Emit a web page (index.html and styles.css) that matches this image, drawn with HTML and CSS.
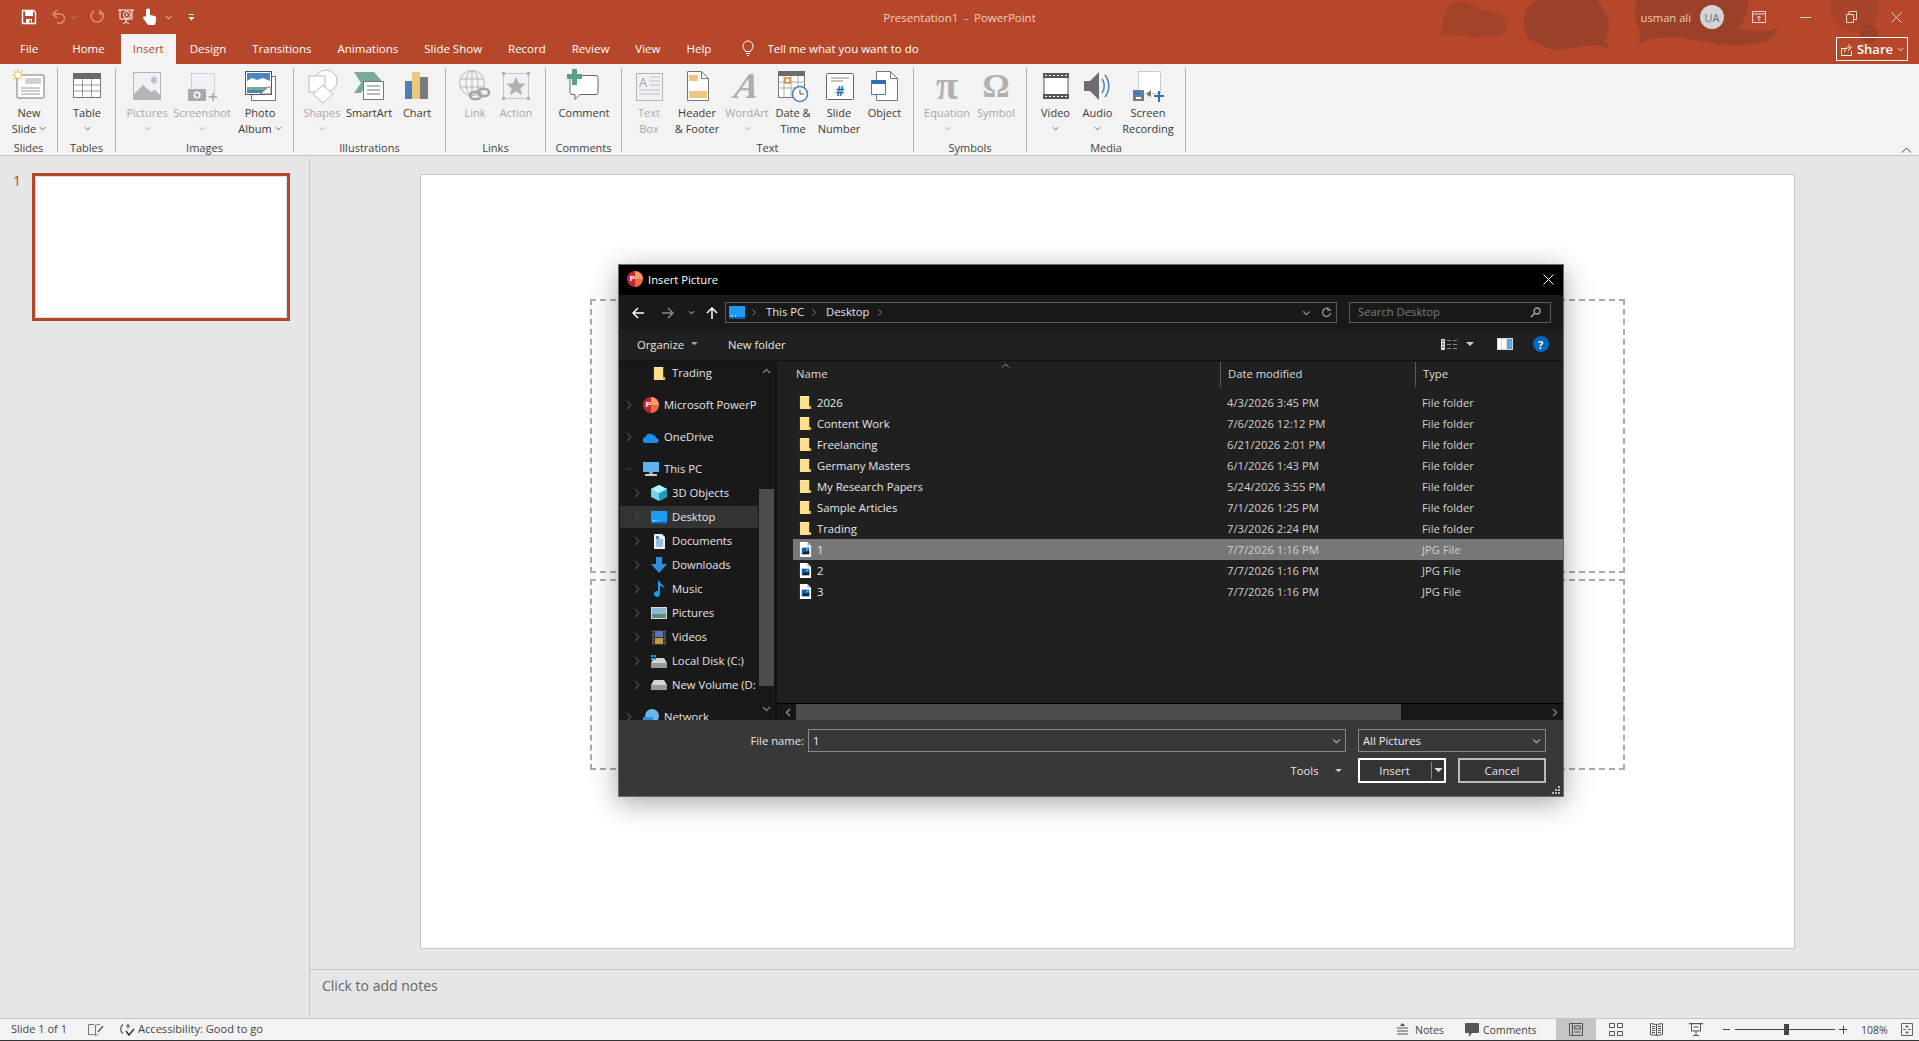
FILE: index.html
```html
<!DOCTYPE html>
<html lang="en">
<head>
    <meta charset="UTF-8">
    <title>Presentation1 - PowerPoint</title>
    <link rel="stylesheet" href="styles.css">
</head>
<body>
<svg class="defs" width="0" height="0">
    <symbol id="chev" viewBox="0 0 8 5"><path d="M1 1l3 3 3-3" fill="none" stroke="currentColor" stroke-width="1"/></symbol>
    <symbol id="arrow" viewBox="0 0 8 12"><path d="M2 2l4 4-4 4" fill="none" stroke="currentColor" stroke-width="1.3"/></symbol>
    <symbol id="caret" viewBox="0 0 10 6"><path d="M0 0h10L5 5z" fill="currentColor"/></symbol>
    <symbol id="folder" viewBox="0 0 14 16"><path d="M1 1h10v11h2v3H1z" fill="#fbdf8d"/><path d="M11 12v3h2v-3z" fill="#e0b850"/><path d="M1 1h10v1H1z" fill="#ffeeb0"/></symbol>
    <symbol id="jpg" viewBox="0 0 14 16"><path d="M1 0h8l4 4v12H1z" fill="#fff"/><path d="M9 0v4h4" fill="#bbb"/><rect x="3" y="6" width="8" height="7" fill="#0a5fa8"/><path d="M3 13l3-3 2 1 3-2v4z" fill="#123"/><rect x="8" y="7" width="2" height="2" fill="#7cc4f0"/></symbol>
    <symbol id="deskicon" viewBox="0 0 16 13"><rect width="16" height="12" fill="#1e9bf0"/><rect y="11" width="16" height="2" fill="#0a5ea8"/><path d="M2 10h2M6 10h1" stroke="#fff" stroke-width="1"/></symbol>
    <symbol id="drive" viewBox="0 0 16 10"><path d="M3 0h10l3 5v5H0V5z" fill="#d5d5d5"/><rect y="5" width="16" height="5" fill="#9a9a9a"/><rect x="12" y="7" width="2" height="1" fill="#3ec85a"/></symbol>
</svg>

<div class="app">
    <div class="top">
        <svg class="watermark" viewBox="0 0 500 64" width="500" height="64">
            <g fill="#9b4029">
                <path fill="#a2432a" transform="translate(21 0)" d="M0 34c3-3 3-8 3-12C3 9 12 0 20 2c8-2 15 2 19 9 8-3 24 0 27 10 2 7-1 12-4 15-10 1-18 1-30 2-10-3-20-4-32-4z"/>
                <path transform="translate(27 0)" d="M84 40c-3-4-6-10-6-18C78 8 88 0 95 0h56c6 8 12 16 12 24 0 8-2 14-4 17 2 3 3 4 4 7-10-4-20-3-30-1-16 3-30 4-36-1-6-4-10-5-13-6z"/>
                <path d="M217 0c-2 10-1 22 4 30 0 5-1 10-2 14 14-7 30-8 44-6 24 4 48 10 76 5 12-2 19-8 20-15-8 3-22 5-40 1 6-8 11-18 10-29z"/>
                <circle fill="#a8442a" cx="436" cy="8" r="24"/>
                <circle cx="450" cy="34" r="9"/>
            </g>
        </svg>
        <div class="titlebar">
            <div class="qat">
                <svg width="16" height="16" viewBox="0 0 16 16"><path d="M1.5 1.5h11l2 2v11h-13z" fill="none" stroke="#fff" stroke-width="1.4"/><path d="M4 2h8v5H4zM5 10h6v5H5z" fill="#fff"/><rect x="8.5" y="11" width="1.5" height="3" fill="#b7472a"/></svg>
                <svg class="q-undo" width="16" height="16" viewBox="0 0 16 16"><path d="M6 1L2 5l4 4M2 5h7a4.500 4.500 0 0 1 0 9H6" fill="none" stroke="#e58a70" stroke-width="1.600"/></svg>
                <svg class="q-chev" width="7" height="5"><use href="#chev"/></svg>
                <svg class="q-redo" width="16" height="16" viewBox="0 0 16 16"><path d="M5 2a6 6 0 1 0 6 0M11 1v4h4" fill="none" stroke="#e58a70" stroke-width="1.600"/></svg>
                <svg class="q-show" width="18" height="18" viewBox="0 0 18 18"><path d="M1 2h16M3 2v9h12V2M9 11v3M6 16l3-2 3 2" fill="none" stroke="#fff"/><circle cx="10" cy="7" r="3.500" fill="none" stroke="#fff"/><path d="M9 5.500v3l2-1.500z" fill="#fff"/></svg>
                <svg class="q-touch" width="16" height="18" viewBox="0 0 16 18"><path d="M4 2c0-2 4-2 4 0v5l5 1c2 1 1 5 0 9H6L1 10c0-2 2-2 3-1z" fill="#fff"/></svg>
                <svg class="q-chev2" width="7" height="5"><use href="#chev"/></svg>
                <svg class="q-more" width="7" height="7" viewBox="0 0 7 7"><path d="M1 .5h5" stroke="#fff"/><path d="M.5 3h6L3.500 6.500z" fill="#fff"/></svg>
            </div>
            <div class="doc-title">Presentation1&nbsp; -&nbsp; PowerPoint</div>
            <div class="win-side">
                <span class="user">usman ali</span>
                <span class="avatar">UA</span>
                <span class="win-btn"><svg width="14" height="12" viewBox="0 0 14 12"><path d="M.5.500h13v11H.500zM.5 3h13M7 10V5M5 7l2-2 2 2" fill="none" stroke="#f4d5ca"/></svg></span>
                <span class="win-btn"><svg width="11" height="1"><rect width="11" height="1" fill="#f4d5ca"/></svg></span>
                <span class="win-btn"><svg width="11" height="12" viewBox="0 0 11 12"><path d="M.5 3.500h7v8h-7zM3 3.500V.5h7.500v8H7.500" fill="none" stroke="#f4d5ca"/></svg></span>
                <span class="win-btn win-last"><svg width="11" height="11" viewBox="0 0 11 11"><path d="M.5.500l10 10M10.500.500l-10 10" stroke="#f4d5ca"/></svg></span>
            </div>
        </div>
        <div class="tabs">
            <span class="tab tab-file">File</span>
            <span class="tab">Home</span>
            <span class="tab tab-on">Insert</span>
            <span class="tab">Design</span>
            <span class="tab">Transitions</span>
            <span class="tab">Animations</span>
            <span class="tab">Slide Show</span>
            <span class="tab">Record</span>
            <span class="tab">Review</span>
            <span class="tab">View</span>
            <span class="tab">Help</span>
            <span class="tell">
                <svg width="12" height="17" viewBox="0 0 12 17"><path d="M3.500 11.500C2.500 9.500 1 8.500 1 6a5 5 0 0 1 10 0c0 2.500-1.500 3.500-2.500 5.500zM4 13.500h4M5 15.500h2" fill="none" stroke="#fff"/></svg>
                Tell me what you want to do
            </span>
            <span class="share">
                <svg width="12" height="13" viewBox="0 0 12 13"><path d="M.5 5.500h4M.5 5.500v7h10V8M3.500 9c0-3 2-4.500 5-4.500M7 1.500l3.500 3-3.500 3" fill="none" stroke="#fff"/></svg>
                Share
                <svg width="7" height="5"><use href="#chev"/></svg>
            </span>
        </div>
    </div>

    <div class="ribbon">
        <div class="group g-slides">
            <div class="item">
                <svg class="rb" viewBox="0 0 34 34"><rect x="5" y="6" width="27" height="23" rx="1" fill="#fff" stroke="#777"/><rect x="13" y="9" width="16" height="6" fill="#d0d0d0"/><path d="M9 19h19M9 22h19M9 25h19" stroke="#999"/><path d="M6 0v12M0 6h12M2 2l8 8M10 2l-8 8" stroke="#f5c16a" stroke-width="1.500"/><circle cx="6" cy="6" r="2.500" fill="#fff"/></svg>
                <span class="lbl">New</span><span class="lbl">Slide <svg class="dd" width="7" height="5"><use href="#chev"/></svg></span>
            </div>
            <div class="glabel">Slides</div>
        </div>
        <div class="group g-tables">
            <div class="item">
                <svg class="rb" viewBox="0 0 34 34"><rect x="3.500" y="4.500" width="27" height="24" fill="#fff" stroke="#777"/><rect x="3" y="4" width="28" height="6" fill="#6b6b6b"/><path d="M3 16h28M3 22h28M12.500 10v18M21.500 10v18" stroke="#999"/></svg>
                <span class="lbl">Table</span><span class="lbl"><svg class="dd" width="7" height="5"><use href="#chev"/></svg></span>
            </div>
            <div class="glabel">Tables</div>
        </div>
        <div class="group g-images">
            <div class="item off">
                <svg class="rb" viewBox="0 0 34 34"><rect x="3.500" y="3.500" width="27" height="27" fill="#f3eff6" stroke="#b5b5b5"/><path d="M4 30v-5l9-9 8 7 4-2 5 5v4z" fill="#b5b5b5"/><ellipse cx="24" cy="11" rx="3" ry="3.500" fill="#c5c0c8"/></svg>
                <span class="lbl">Pictures</span><span class="lbl"><svg class="dd" width="7" height="5"><use href="#chev"/></svg></span>
            </div>
            <div class="item off">
                <svg class="rb" viewBox="0 0 34 34"><rect x="6.500" y="4.500" width="23" height="23" fill="#f3eff6" stroke="#c0c0c0" stroke-dasharray="2 1"/><rect x="3" y="20" width="18" height="12" rx="1" fill="#a9a9a9"/><circle cx="12" cy="26" r="3.500" fill="#fff"/><circle cx="12" cy="26" r="2" fill="#a9a9a9"/><path d="M28 24v8M24 28h8" stroke="#a9a9a9" stroke-width="1.500"/></svg>
                <span class="lbl">Screenshot</span><span class="lbl"><svg class="dd" width="7" height="5"><use href="#chev"/></svg></span>
            </div>
            <div class="item">
                <svg class="rb" viewBox="0 0 34 34"><rect x="8.500" y="7.500" width="24" height="24" fill="#fff" stroke="#777"/><rect x="2.500" y="2.500" width="26" height="23" fill="#fff" stroke="#555"/><rect x="4" y="4" width="23" height="20" fill="#4a86c5"/><path d="M4 12l5-3 5 2 6-2 7 3v6H4z" fill="#fff"/><rect x="4" y="18" width="23" height="3" fill="#7fa98a"/><path d="M17 25l8-7h3v7z" fill="#fff" stroke="#777"/></svg>
                <span class="lbl">Photo</span><span class="lbl">Album <svg class="dd" width="7" height="5"><use href="#chev"/></svg></span>
            </div>
            <div class="glabel">Images</div>
        </div>
        <div class="group g-illus">
            <div class="item off">
                <svg class="rb" viewBox="0 0 34 34"><circle cx="21" cy="12" r="11" fill="#fff" stroke="#bbb"/><rect x="4" y="7" width="16" height="16" fill="#fff" stroke="#bbb"/><path d="M18 16l10 9-10 9-10-9z" fill="#fff" stroke="#bbb"/></svg>
                <span class="lbl">Shapes</span><span class="lbl"><svg class="dd" width="7" height="5"><use href="#chev"/></svg></span>
            </div>
            <div class="item">
                <svg class="rb" viewBox="0 0 34 34"><path d="M2 3h20l7 8v8H20l-8 0-3 5H2l7-10z" fill="#79ab98"/><rect x="11.500" y="12.500" width="20" height="18" fill="#fff" stroke="#777"/><path d="M15 17h13M15 21h13M15 25h13" stroke="#777"/></svg>
                <span class="lbl">SmartArt</span>
            </div>
            <div class="item">
                <svg class="rb" viewBox="0 0 34 34"><rect x="5" y="12" width="7" height="18" fill="#4a7fb9"/><rect x="12" y="3" width="8" height="27" fill="#edc77c"/><rect x="20" y="8" width="8" height="22" fill="#7a7a7a"/></svg>
                <span class="lbl">Chart</span>
            </div>
            <div class="glabel">Illustrations</div>
        </div>
        <div class="group g-links">
            <div class="item off">
                <svg class="rb" viewBox="0 0 34 34"><g fill="none" stroke="#b5b5b5"><circle cx="14" cy="14" r="12.500"/><ellipse cx="14" cy="14" rx="6" ry="12.500"/><path d="M14 1.500v25M2 10h24M2 18h24"/></g><g fill="none" stroke="#a5a5a5" stroke-width="2.500"><rect x="12" y="23" width="11" height="7" rx="3.500"/><rect x="20" y="20" width="11" height="7" rx="3.500"/></g></svg>
                <span class="lbl">Link</span>
            </div>
            <div class="item off">
                <svg class="rb" viewBox="0 0 34 34"><rect x="4.500" y="4.500" width="25" height="25" fill="#f3eff6" stroke="#c5c5c5"/><g fill="#b0b0b0"><rect x="3" y="3" width="3" height="3"/><rect x="28" y="3" width="3" height="3"/><rect x="3" y="28" width="3" height="3"/><rect x="28" y="28" width="3" height="3"/><path d="M17 8l2.800 6.200 6.700.6-5 4.500 1.500 6.700-6-3.500-6 3.500 1.500-6.700-5-4.500 6.700-.6z"/></g></svg>
                <span class="lbl">Action</span>
            </div>
            <div class="glabel">Links</div>
        </div>
        <div class="group g-comments">
            <div class="item">
                <svg class="rb" viewBox="0 0 34 34"><path d="M5 6.500h24a2 2 0 0 1 2 2v15a2 2 0 0 1-2 2H13l-5 5v-5H5a2 2 0 0 1-2-2V8.500a2 2 0 0 1 2-2z" fill="#fff" stroke="#666"/><path d="M5 0h5v5h5v5h-5v6H5v-6H0V5h5z" fill="#5d9e87"/></svg>
                <span class="lbl">Comment</span>
            </div>
            <div class="glabel">Comments</div>
        </div>
        <div class="group g-text">
            <div class="item off">
                <svg class="rb" viewBox="0 0 34 34"><rect x="4.500" y="4.500" width="26" height="27" fill="#f3eff6" stroke="#b5b5b5"/><text x="7" y="18" class="rb-a">A</text><path d="M18 8h10M18 12h10M18 16h10M7 21h21M7 25h21" stroke="#c0c0c0"/></svg>
                <span class="lbl">Text</span><span class="lbl">Box</span>
            </div>
            <div class="item">
                <svg class="rb" viewBox="0 0 34 34"><path d="M7.500 2.500h14l7 7v22h-21z" fill="#fff" stroke="#777"/><path d="M21.500 2.500v7h7" fill="none" stroke="#777"/><rect x="9" y="6" width="9" height="6" fill="#edc77c"/><rect x="9" y="22" width="18" height="7" fill="#edc77c"/></svg>
                <span class="lbl">Header</span><span class="lbl">&amp; Footer</span>
            </div>
            <div class="item off">
                <span class="glyph glyph-word">A</span>
                <span class="lbl">WordArt</span><span class="lbl"><svg class="dd" width="7" height="5"><use href="#chev"/></svg></span>
            </div>
            <div class="item">
                <svg class="rb" viewBox="0 0 34 34"><rect x="2.500" y="2.500" width="26" height="26" fill="#fff" stroke="#777"/><rect x="2" y="2" width="27" height="5" fill="#6b6b6b"/><path d="M2 13h27M2 19h27M8 7v22M15 7v22M22 7v22" stroke="#aaa"/><rect x="9" y="9" width="5" height="5" fill="#fff" stroke="#d9822b" stroke-width="1.500"/><circle cx="24" cy="25" r="7.500" fill="#fff" stroke="#4a7fb9" stroke-width="1.500"/><path d="M24 20.500V25h4" fill="none" stroke="#555"/></svg>
                <span class="lbl">Date &amp;</span><span class="lbl">Time</span>
            </div>
            <div class="item">
                <svg class="rb" viewBox="0 0 34 34"><rect x="4.500" y="4.500" width="27" height="26" rx="1" fill="#fff" stroke="#666"/><path d="M9 9h18M9 12h12" stroke="#888"/><text x="18" y="27" class="rb-hash">#</text></svg>
                <span class="lbl">Slide</span><span class="lbl">Number</span>
            </div>
            <div class="item">
                <svg class="rb" viewBox="0 0 34 34"><path d="M8.500 2.500h14l7 7v22h-21z" fill="#fff" stroke="#777"/><path d="M22.500 2.500v7h7" fill="none" stroke="#777"/><rect x="3.500" y="11.500" width="14" height="14" fill="#fff" stroke="#4a7fb9"/><rect x="3" y="11" width="15" height="4" fill="#2f6fb0"/></svg>
                <span class="lbl">Object</span>
            </div>
            <div class="glabel">Text</div>
        </div>
        <div class="group g-symbols">
            <div class="item off">
                <span class="glyph glyph-pi">π</span>
                <span class="lbl">Equation</span><span class="lbl"><svg class="dd" width="7" height="5"><use href="#chev"/></svg></span>
            </div>
            <div class="item off">
                <span class="glyph">Ω</span>
                <span class="lbl">Symbol</span>
            </div>
            <div class="glabel">Symbols</div>
        </div>
        <div class="group g-media">
            <div class="item">
                <svg class="rb" viewBox="0 0 34 34"><rect x="5" y="5" width="24" height="24" fill="#fff" stroke="#555"/><rect x="4" y="4" width="26" height="5" fill="#555"/><rect x="4" y="25" width="26" height="5" fill="#555"/><path d="M6 6.500h22M6 27.500h22" stroke="#fff" stroke-dasharray="2 2"/></svg>
                <span class="lbl">Video</span><span class="lbl"><svg class="dd" width="7" height="5"><use href="#chev"/></svg></span>
            </div>
            <div class="item">
                <svg class="rb" viewBox="0 0 34 34"><path d="M3 12h6l9-9v28l-9-9H3z" fill="#6d6d6d"/><path d="M21 10c3 4 3 10 0 14M24 6c5 6 5 16 0 22" fill="none" stroke="#4a7fb9" stroke-width="1.500"/></svg>
                <span class="lbl">Audio</span><span class="lbl"><svg class="dd" width="7" height="5"><use href="#chev"/></svg></span>
            </div>
            <div class="item">
                <svg class="rb" viewBox="0 0 34 34"><rect x="7.500" y="2.500" width="22" height="22" fill="#fff" stroke="#b5b5b5" stroke-dasharray="2 1"/><rect x="2" y="21" width="11" height="11" fill="#6d7d8a"/><rect x="2" y="23" width="7" height="3" fill="#2f7fd0"/><rect x="5" y="28" width="5" height="2" fill="#fff"/><path d="M16 24l4-3v7l-4-2z" fill="#777"/><path d="M28 22v11M23 27h10" stroke="#2f6fb0" stroke-width="2"/></svg>
                <span class="lbl">Screen</span><span class="lbl">Recording</span>
            </div>
            <div class="glabel">Media</div>
        </div>
        <svg class="collapse" width="11" height="6" viewBox="0 0 11 6"><path d="M1 5.500l4.500-4.500 4.500 4.500" fill="none" stroke="#444"/></svg>
    </div>

    <div class="main">
        <div class="rail">
            <span class="slide-num">1</span>
            <div class="thumb"></div>
        </div>
        <div class="work">
            <div class="editor">
                <div class="slide">
                    <div class="ph ph-title"></div>
                    <div class="ph ph-sub"></div>
                </div>
            </div>
            <div class="notes">Click to add notes</div>
        </div>
    </div>

    <div class="status">
        <span class="st-slide">Slide 1 of 1</span>
        <svg class="st-book" width="16" height="13" viewBox="0 0 16 13"><path d="M.5 1.500h5l2 1v10l-2-1h-5zM7.500 2.500l2-1H12M10 11.500H9.500l-2 1" fill="none" stroke="#777"/><path d="M10 9l5-6" stroke="#555" stroke-width="1.300"/></svg>
        <svg class="st-acc" width="17" height="15" viewBox="0 0 17 15"><path d="M5 2.500a5.500 5.500 0 0 0 0 9M10 1.500v5M8 4h4M2 8" fill="none" stroke="#555" stroke-width="1.200"/><path d="M8 9l3 4 5-6" fill="none" stroke="#333" stroke-width="1.500"/></svg>
        <span class="st-acc-text">Accessibility: Good to go</span>
        <span class="st-right">
            <svg class="st-notes-i" width="11" height="13" viewBox="0 0 11 13"><path d="M5.500 0l2.500 3H3z" fill="#444"/><path d="M0 5h11M0 8h11M0 11h11" stroke="#555"/></svg>
            <span class="st-notes">Notes</span>
            <svg class="st-comm-i" width="14" height="14" viewBox="0 0 14 14"><path d="M1 0h12a1 1 0 0 1 1 1v8a1 1 0 0 1-1 1H7l-3 4v-4H1a1 1 0 0 1-1-1V1a1 1 0 0 1 1-1z" fill="#555"/></svg>
            <span class="st-comm">Comments</span>
            <span class="view view-on"><svg width="14" height="13" viewBox="0 0 14 13"><path d="M.5.500h13v12H.5zM3.500.500v12M5.500 3h6v3h-6zM5.500 9h6" fill="none" stroke="#555"/></svg></span>
            <span class="view"><svg width="14" height="13" viewBox="0 0 14 13"><path d="M.5.500h5v4h-5zM8.500.500h5v4h-5zM.5 8.500h5v4h-5zM8.500 8.500h5v4h-5z" fill="none" stroke="#555"/></svg></span>
            <span class="view"><svg width="13" height="13" viewBox="0 0 13 13"><path d="M.5.500l6 1 6-1v11l-6 1-6-1zM6.500 1.500v11M2 3.500h3M2 5.500h3M2 7.500h3M2 9.500h3M8 3.500h3M8 5.500h3M8 7.500h3M8 9.500h3" fill="none" stroke="#555"/></svg></span>
            <span class="view"><svg width="14" height="13" viewBox="0 0 14 13"><path d="M0 .500h14" stroke="#555" stroke-width="1.500"/><path d="M2.500 1v7h9V1M4.500 4h5M7 8v4M4 12.500h6" fill="none" stroke="#555"/></svg></span>
            <span class="zoom-minus"></span>
            <span class="zoom-track"><span class="zoom-thumb"></span></span>
            <span class="zoom-plus"></span>
            <span class="zoom-pct">108%</span>
            <svg class="zoom-fit" width="12" height="13" viewBox="0 0 12 13"><path d="M.5.500h11v12H.5zM6 2v3M4.500 3.500h3M6 8v3M4.500 9.500h3M2 6.500h3M7 6.500h3" fill="none" stroke="#666"/></svg>
        </span>
    </div>

    <div class="dialog">
        <div class="dlg-title">
            <span class="pp"><b>P</b></span>
            <span>Insert Picture</span>
            <svg class="dlg-x" width="11" height="11" viewBox="0 0 11 11"><path d="M.5.500l10 10M10.500.500l-10 10" stroke="#fff"/></svg>
        </div>
        <div class="dlg-nav">
            <svg class="nav-back" width="12" height="12" viewBox="0 0 12 12"><path d="M6 1L1 6l5 5M1 6h11" fill="none" stroke="#fff" stroke-width="1.500"/></svg>
            <svg class="nav-fwd" width="12" height="12" viewBox="0 0 12 12"><path d="M6 1l5 5-5 5M11 6H0" fill="none" stroke="#8a8a8a" stroke-width="1.500"/></svg>
            <svg class="nav-down" width="7" height="5"><use href="#chev"/></svg>
            <svg class="nav-up" width="12" height="12" viewBox="0 0 12 12"><path d="M1 6l5-5 5 5M6 1v11" fill="none" stroke="#fff" stroke-width="1.500"/></svg>
            <div class="address">
                <svg class="addr-ic" width="16" height="13"><use href="#deskicon"/></svg>
                <svg class="addr-sep" width="6" height="9"><use href="#arrow"/></svg>
                <span>This PC</span>
                <svg class="addr-sep" width="6" height="9"><use href="#arrow"/></svg>
                <span>Desktop</span>
                <svg class="addr-sep" width="6" height="9"><use href="#arrow"/></svg>
                <svg class="addr-down" width="9" height="6"><use href="#chev"/></svg>
                <svg class="addr-refresh" width="11" height="11" viewBox="0 0 11 11"><path d="M9.500 6a4 4 0 1 1-2-4M7 0v3h3" fill="none" stroke="#9a9a9a" stroke-width="1.300"/></svg>
            </div>
            <div class="search">
                <span>Search Desktop</span>
                <svg width="11" height="11" viewBox="0 0 11 11"><circle cx="7" cy="4" r="3" fill="none" stroke="#aaa" stroke-width="1.300"/><path d="M5 6L1 10" stroke="#aaa" stroke-width="1.500"/></svg>
            </div>
        </div>
        <div class="dlg-tools">
            <span class="t-organize">Organize</span>
            <svg class="t-caret" width="7" height="4"><use href="#caret"/></svg>
            <span class="t-new">New folder</span>
            <svg class="t-view" width="16" height="11" viewBox="0 0 16 11"><rect width="4" height="11" fill="#ddd"/><path d="M1 2h2M1 5h2M1 8h2" stroke="#444"/><path d="M6 1.500h4M12 1.500h4M6 5.500h4M12 5.500h4M6 9.500h4M12 9.500h4" stroke="#888"/></svg>
            <svg class="t-vcaret" width="8" height="5"><use href="#caret"/></svg>
            <svg class="t-pane" width="16" height="12" viewBox="0 0 16 12"><rect width="16" height="12" fill="#d8d8d8"/><rect x="1" y="1" width="3" height="10" fill="#fff"/><rect x="5" y="1" width="4" height="10" fill="#fff"/><rect x="10" y="1" width="5" height="10" fill="#5aa7e6"/></svg>
            <span class="t-help">?</span>
        </div>
        <div class="dlg-body">
            <div class="tree">
                <div class="tree-rows">
                    <div class="t-row t-sub"><span class="t-ar"></span><svg class="t-ic" width="13" height="15"><use href="#folder"/></svg><span class="t-txt">Trading</span></div>
                    <div class="t-row t-gap"><svg class="t-ar" width="8" height="12"><use href="#arrow"/></svg><span class="pp t-ic"><b>P</b></span><span class="t-txt">Microsoft PowerP</span></div>
                    <div class="t-row t-gap"><svg class="t-ar" width="8" height="12"><use href="#arrow"/></svg><svg class="t-ic" width="16" height="11" viewBox="0 0 16 11"><path d="M3 11a3 3 0 0 1-.5-6A4.500 4.500 0 0 1 10 3a3 3 0 0 1 3 3 2.500 2.500 0 0 1 0 5z" fill="#1b8ee8"/></svg><span class="t-txt">OneDrive</span></div>
                    <div class="t-row t-gap"><svg class="t-ar" width="8" height="12"><use href="#chev"/></svg><svg class="t-ic" width="16" height="15" viewBox="0 0 16 15"><rect width="16" height="10" fill="#5bb4f0"/><rect x="6" y="10" width="4" height="2" fill="#999"/><rect x="2" y="12" width="12" height="2" fill="#ccc"/></svg><span class="t-txt">This PC</span></div>
                    <div class="t-row t-sub"><svg class="t-ar" width="8" height="12"><use href="#arrow"/></svg><svg class="t-ic" width="16" height="16" viewBox="0 0 16 16"><path d="M8 0l8 4v8l-8 4-8-4V4z" fill="#6fd6e8"/><path d="M8 8v8l8-4V4z" fill="#1c9db8"/><path d="M8 8L0 4l8-4 8 4z" fill="#b8f0f8"/></svg><span class="t-txt">3D Objects</span></div>
                    <div class="t-row t-sub t-on"><svg class="t-ar" width="8" height="12"><use href="#arrow"/></svg><svg class="t-ic" width="16" height="13"><use href="#deskicon"/></svg><span class="t-txt">Desktop</span></div>
                    <div class="t-row t-sub"><svg class="t-ar" width="8" height="12"><use href="#arrow"/></svg><svg class="t-ic" width="13" height="15" viewBox="0 0 13 15"><path d="M1 0h8l3 3v12H1z" fill="#eef2f5"/><path d="M3 6h7M3 8h7M3 10h7M3 12h7" stroke="#4a8bc0"/><rect x="3" y="2" width="3" height="3" fill="#4a8bc0"/></svg><span class="t-txt">Documents</span></div>
                    <div class="t-row t-sub"><svg class="t-ar" width="8" height="12"><use href="#arrow"/></svg><svg class="t-ic" width="16" height="16" viewBox="0 0 16 16"><path d="M5 0h6v7h5l-8 9-8-9h5z" fill="#2e8fe0"/></svg><span class="t-txt">Downloads</span></div>
                    <div class="t-row t-sub"><svg class="t-ar" width="8" height="12"><use href="#arrow"/></svg><svg class="t-ic" width="12" height="16" viewBox="0 0 12 16"><path d="M5 0h1.500c.5 3 5 4 5 8-1-2-3-3-4.500-3v8a3 3 0 1 1-2-2.800z" fill="#1a9af0"/></svg><span class="t-txt">Music</span></div>
                    <div class="t-row t-sub"><svg class="t-ar" width="8" height="12"><use href="#arrow"/></svg><svg class="t-ic" width="16" height="12" viewBox="0 0 16 12"><rect width="16" height="12" fill="#dcdcdc"/><rect x="1" y="1" width="14" height="10" fill="#8fb8d0"/><path d="M1 7h14v4H1z" fill="#5f8c7a"/></svg><span class="t-txt">Pictures</span></div>
                    <div class="t-row t-sub"><svg class="t-ar" width="8" height="12"><use href="#arrow"/></svg><svg class="t-ic" width="14" height="15" viewBox="0 0 14 15"><rect width="14" height="15" fill="#333"/><rect x="3" y="1" width="8" height="6" fill="#5a72c0"/><rect x="3" y="8" width="8" height="6" fill="#c09a3a"/><path d="M1 1v13M13 1v13" stroke="#999" stroke-dasharray="1 1"/></svg><span class="t-txt">Videos</span></div>
                    <div class="t-row t-sub"><svg class="t-ar" width="8" height="12"><use href="#arrow"/></svg><svg class="t-ic" width="16" height="13" viewBox="0 0 16 13"><use href="#drive" y="3" width="16" height="10"/><path d="M0 0h2v2H0zM3 0h2v2H3zM0 3h2v2H0zM3 3h2v2H3z" fill="#1fa8f0"/></svg><span class="t-txt">Local Disk (C:)</span></div>
                    <div class="t-row t-sub"><svg class="t-ar" width="8" height="12"><use href="#arrow"/></svg><svg class="t-ic" width="16" height="10"><use href="#drive"/></svg><span class="t-txt">New Volume (D:</span></div>
                    <div class="t-row t-gap t-last"><svg class="t-ar" width="8" height="12"><use href="#arrow"/></svg><svg class="t-ic" width="16" height="16" viewBox="0 0 16 16"><circle cx="9" cy="7" r="7" fill="#6fb4e8"/><rect y="8" width="10" height="8" fill="#2e8fe0"/></svg><span class="t-txt">Network</span></div>
                </div>
                <div class="vscroll">
                    <svg class="vs-up" width="9" height="6" viewBox="0 0 9 6"><path d="M1 5l3.500-3.500L8 5" fill="none" stroke="#777" stroke-width="1.500"/></svg>
                    <div class="vs-thumb"></div>
                    <svg class="vs-down" width="9" height="6" viewBox="0 0 9 6"><path d="M1 1l3.500 3.500L8 1" fill="none" stroke="#777" stroke-width="1.500"/></svg>
                </div>
            </div>
            <div class="files">
                <div class="f-head">
                    <span class="h-name">Name</span>
                    <span class="h-col">Date modified</span>
                    <span class="h-col">Type</span>
                    <svg class="h-sort" width="9" height="5" viewBox="0 0 9 5"><path d="M1 4.500L4.500 1 8 4.500" fill="none" stroke="#999"/></svg>
                </div>
                <div class="f-list">
                    <div class="f-row"><span class="f-name"><svg width="13" height="15"><use href="#folder"/></svg>2026</span><span class="f-date">4/3/2026 3:45 PM</span><span class="f-type">File folder</span></div>
                    <div class="f-row"><span class="f-name"><svg width="13" height="15"><use href="#folder"/></svg>Content Work</span><span class="f-date">7/6/2026 12:12 PM</span><span class="f-type">File folder</span></div>
                    <div class="f-row"><span class="f-name"><svg width="13" height="15"><use href="#folder"/></svg>Freelancing</span><span class="f-date">6/21/2026 2:01 PM</span><span class="f-type">File folder</span></div>
                    <div class="f-row"><span class="f-name"><svg width="13" height="15"><use href="#folder"/></svg>Germany Masters</span><span class="f-date">6/1/2026 1:43 PM</span><span class="f-type">File folder</span></div>
                    <div class="f-row"><span class="f-name"><svg width="13" height="15"><use href="#folder"/></svg>My Research Papers</span><span class="f-date">5/24/2026 3:55 PM</span><span class="f-type">File folder</span></div>
                    <div class="f-row"><span class="f-name"><svg width="13" height="15"><use href="#folder"/></svg>Sample Articles</span><span class="f-date">7/1/2026 1:25 PM</span><span class="f-type">File folder</span></div>
                    <div class="f-row"><span class="f-name"><svg width="13" height="15"><use href="#folder"/></svg>Trading</span><span class="f-date">7/3/2026 2:24 PM</span><span class="f-type">File folder</span></div>
                    <div class="f-row f-on"><span class="f-name"><svg width="13" height="15"><use href="#jpg"/></svg>1</span><span class="f-date">7/7/2026 1:16 PM</span><span class="f-type">JPG File</span></div>
                    <div class="f-row"><span class="f-name"><svg width="13" height="15"><use href="#jpg"/></svg>2</span><span class="f-date">7/7/2026 1:16 PM</span><span class="f-type">JPG File</span></div>
                    <div class="f-row"><span class="f-name"><svg width="13" height="15"><use href="#jpg"/></svg>3</span><span class="f-date">7/7/2026 1:16 PM</span><span class="f-type">JPG File</span></div>
                </div>
                <div class="hscroll">
                    <svg class="hs-left" width="6" height="9" viewBox="0 0 6 9"><path d="M5 1L1.500 4.500 5 8" fill="none" stroke="#888" stroke-width="1.500"/></svg>
                    <div class="hs-thumb"></div>
                    <svg class="hs-right" width="6" height="9" viewBox="0 0 6 9"><path d="M1 1l3.500 3.500L1 8" fill="none" stroke="#777" stroke-width="1.500"/></svg>
                </div>
            </div>
        </div>
        <div class="dlg-foot">
            <div class="foot-row">
                <span class="foot-label">File name:</span>
                <div class="field f-fname"><span>1</span><svg width="9" height="6"><use href="#chev"/></svg></div>
                <div class="field f-filter"><span>All Pictures</span><svg width="9" height="6"><use href="#chev"/></svg></div>
            </div>
            <div class="foot-row foot-btns">
                <span class="tools">Tools</span>
                <svg class="tools-caret" width="7" height="4"><use href="#caret"/></svg>
                <div class="btn btn-insert"><span class="ins-text">Insert</span><span class="ins-split"><svg width="9" height="5"><use href="#caret"/></svg></span></div>
                <div class="btn btn-cancel">Cancel</div>
            </div>
            <svg class="grip" width="9" height="9" viewBox="0 0 9 9"><path d="M6 0h2v2H6zM3 3h2v2H3zM6 3h2v2H6zM0 6h2v2H0zM3 6h2v2H3zM6 6h2v2H6z" fill="#bbb"/></svg>
        </div>
    </div>
</div>
</body>
</html>
```

FILE: styles.css
```css
* {
    margin: 0;
    padding: 0;
    box-sizing: border-box;
    font-family: "Open Sans", "Noto Sans", sans-serif;
}
html, body {
    width: 1919px;
    height: 1041px;
    overflow: hidden;
    background: #e6e6e6;
}
svg {
    display: block;
    flex: none;
}
.defs {
    position: absolute;
}
.app {
    position: relative;
    display: flex;
    flex-direction: column;
    width: 1919px;
    height: 1041px;
}

/* title bar + tabs */
.top {
    position: relative;
    height: 64px;
    background: #b7472a;
    color: #fff;
    font-size: 11.5px;
}
.watermark {
    position: absolute;
    left: 1419px;
    top: 0;
}
.titlebar {
    position: relative;
    display: grid;
    grid-template-columns: 1fr auto 1fr;
    align-items: center;
    height: 34px;
}
.qat {
    display: flex;
    align-items: center;
    padding-left: 21px;
    color: #fff;
}
.q-undo { margin-left: 14px; }
.q-chev { margin-left: 4px; color: #e58a70; }
.q-redo { margin-left: 11px; }
.q-show { margin-left: 12px; }
.q-touch { margin-left: 7px; }
.q-chev2 { margin-left: 7px; }
.q-more { margin-left: 16px; }
.doc-title {
    color: #f3cdbf;
    font-size: 11.5px;
}
.win-side {
    display: flex;
    align-items: center;
    justify-content: flex-end;
}
.user {
    color: #f3cdbf;
    margin-right: 9px;
    font-size: 11.2px;
}
.avatar {
    display: flex;
    align-items: center;
    justify-content: center;
    width: 24px;
    height: 24px;
    margin-right: 12px;
    border-radius: 50%;
    background: #d4d4d4;
    color: #66707a;
    font-size: 11px;
}
.win-btn {
    display: flex;
    align-items: center;
    justify-content: center;
    width: 46px;
    height: 30px;
}
.win-last {
    width: 45px;
}
.tabs {
    position: relative;
    display: flex;
    align-items: stretch;
    height: 30px;
}
.tab {
    display: flex;
    align-items: center;
    padding: 0 13px 2px;
}
.tab-file {
    margin: 0 8px 0 7px;
}
.tab-on {
    background: #f3f3f3;
    color: #b7472a;
    padding: 0 12px 2px;
    margin: 0 1px 0 3px;
}
.tell {
    display: flex;
    align-items: center;
    gap: 13px;
    margin-left: 18px;
    padding-bottom: 2px;
}
.share {
    display: flex;
    align-items: center;
    gap: 4px;
    height: 24px;
    margin: 3px 11px 0 auto;
    padding: 0 3px 0 4px;
    border: 1px solid #fff;
    font-size: 13px;
    font-weight: 600;
}

/* ribbon */
.ribbon {
    position: relative;
    display: flex;
    height: 92px;
    padding-top: 4px;
    background: #f3f3f3;
    border-bottom: 1px solid #c6c6c6;
    color: #3a3a3a;
    font-size: 11px;
}
.group {
    display: grid;
    grid-template-rows: 72px 12px;
    height: 84px;
    padding-left: 4px;
    border-right: 1px solid #b1b1b1;
}
.g-slides { width: 58px; grid-template-columns: 50px 1fr; }
.g-tables { width: 58px; grid-template-columns: 50px 1fr; }
.g-images { width: 178px; grid-template-columns: 54px 56px 60px 1fr; }
.g-illus { width: 152px; grid-template-columns: 48px 46px 50px 1fr; }
.g-links { width: 100px; grid-template-columns: 50px 32px 1fr; }
.g-comments { width: 76px; grid-template-columns: 68px 1fr; }
.g-text { width: 292px; grid-template-columns: 46px 50px 50px 42px 50px 41px 1fr; }
.g-symbols { width: 113px; grid-template-columns: 58px 40px 1fr; }
.g-media { width: 159px; grid-template-columns: 49px 35px 66px 1fr; }
.item {
    display: flex;
    flex-direction: column;
    align-items: center;
    min-width: 0;
}
.rb {
    width: 34px;
    height: 34px;
    margin: 1px 0;
    overflow: visible;
}
.lbl {
    display: flex;
    align-items: center;
    gap: 3px;
    height: 16px;
    white-space: nowrap;
}
.dd {
    color: #555;
}
.off {
    color: #a8a8a8;
}
.off .dd {
    color: #a8a8a8;
}
.glabel {
    grid-column: 1 / -1;
    grid-row: 2;
    height: 12px;
    margin-left: -4px;
    line-height: 16px;
    text-align: center;
    white-space: nowrap;
    color: #444;
}
.rb-a {
    font-size: 13px;
    fill: #a5a5a5;
}
.rb-hash {
    font-size: 14px;
    font-weight: 700;
    fill: #2f6fb0;
    text-anchor: middle;
}
.glyph {
    display: block;
    height: 36px;
    font-family: "Liberation Serif", serif;
    font-size: 34px;
    font-weight: 700;
    line-height: 36px;
    color: #b0b0b0;
}
.glyph-pi {
    font-size: 40px;
}
.glyph-word {
    font-style: italic;
    font-size: 36px;
    color: #adadad;
    transform: skewX(-10deg);
}
.collapse {
    position: absolute;
    left: 1901px;
    top: 83px;
}

/* slide panes */
.main {
    display: flex;
    flex: 1;
    min-height: 0;
}
.rail {
    display: flex;
    width: 310px;
    padding: 17px 0 0 13px;
    position: relative;
}
.rail::after {
    content: "";
    position: absolute;
    right: 0;
    top: 3px;
    bottom: 3px;
    width: 1px;
    background: #c6c6c6;
}
.slide-num {
    width: 19px;
    color: #b7472a;
    font-size: 14px;
    line-height: 16px;
}
.thumb {
    width: 258px;
    height: 148px;
    background: #fff;
    border: 3px solid #b7472a;
    outline: 1px solid #e0e0e0;
    outline-offset: -4px;
}
.work {
    display: flex;
    flex-direction: column;
    flex: 1;
}
.editor {
    flex: 1;
    padding: 18px 0 0 110px;
}
.slide {
    display: flex;
    flex-direction: column;
    gap: 6px;
    width: 1375px;
    height: 775px;
    padding: 124px 0 0 169px;
    background: #fff;
    border: 1px solid #c6c6c6;
}
.ph {
    width: 1035px;
    border: 2px dashed #aaa;
}
.ph-title {
    height: 274px;
}
.ph-sub {
    height: 191px;
}
.notes {
    height: 49px;
    padding: 6px 0 0 12px;
    border-top: 1px solid #c6c6c6;
    color: #666;
    font-size: 14px;
}

/* status bar */
.status {
    display: flex;
    align-items: center;
    height: 23px;
    background: #f3f3f3;
    border-top: 1px solid #c6c6c6;
    border-bottom: 1px solid #333;
    color: #444;
    font-size: 11px;
}
.st-slide {
    margin-left: 11px;
    width: 77px;
    padding-bottom: 2px;
}
.st-acc {
    margin-left: 14px;
}
.st-acc-text {
    margin-left: 3px;
    padding-bottom: 2px;
    font-size: 11.1px;
}
.st-right {
    display: flex;
    align-items: center;
    height: 100%;
    margin-left: auto;
    font-size: 10.5px;
}
.st-notes-i {
    margin-right: 7px;
}
.st-notes {
    width: 50px;
}
.st-comm-i {
    margin-right: 4px;
}
.st-comm {
    width: 73px;
}
.view {
    display: flex;
    align-items: center;
    justify-content: center;
    width: 40px;
    height: 100%;
}
.view-on {
    background: #c5c5c5;
}
.zoom-minus {
    width: 7px;
    height: 1px;
    margin-left: 7px;
    background: #444;
}
.zoom-track {
    position: relative;
    width: 100px;
    height: 1px;
    margin-left: 5px;
    background: #444;
}
.zoom-thumb {
    position: absolute;
    left: 49px;
    top: -5px;
    width: 5px;
    height: 11px;
    background: #444;
}
.zoom-plus {
    position: relative;
    width: 8px;
    height: 1px;
    margin-left: 4px;
    background: #444;
}
.zoom-plus::after {
    content: "";
    position: absolute;
    left: 3.500px;
    top: -3.500px;
    width: 1px;
    height: 8px;
    background: #444;
}
.zoom-pct {
    width: 40px;
    margin-left: 14px;
}
.zoom-fit {
    margin-right: 6px;
}

/* insert picture dialog */
.dialog {
    position: absolute;
    left: 618px;
    top: 264px;
    display: flex;
    flex-direction: column;
    width: 946px;
    height: 533px;
    background: #202020;
    border: 1px solid #6a6a6a;
    box-shadow: 0 6px 26px rgba(0, 0, 0, 0.35);
    color: #e6e6e6;
    font-size: 11.25px;
}
.pp {
    display: flex;
    align-items: center;
    justify-content: center;
    flex: none;
    width: 16px;
    height: 16px;
    padding-right: 5px;
    border-radius: 50%;
    background: conic-gradient(#ff9a6b 0 25%, #ed6c47 25% 50%, #c4262e 50% 100%);
    color: #fff;
    font-size: 8px;
    line-height: 1;
}
.pp b {
    font-family: "Liberation Sans", sans-serif;
}
.dlg-title {
    display: flex;
    align-items: center;
    gap: 5px;
    height: 30px;
    padding: 0 0 2px 8px;
    background: #000;
    color: #fff;
}
.dlg-x {
    margin-left: auto;
    margin-right: 9px;
}
.dlg-nav {
    display: flex;
    align-items: center;
    height: 35px;
    background: #191919;
}
.nav-back {
    margin-left: 13px;
}
.nav-fwd {
    margin-left: 18px;
}
.nav-down {
    margin-left: 14px;
    color: #ddd;
}
.nav-up {
    margin-left: 11px;
}
.address {
    display: flex;
    align-items: center;
    width: 612px;
    height: 21px;
    margin-left: 7px;
    padding-left: 3px;
    border: 1px solid #5a5a5a;
}
.address span, .search span {
    padding-bottom: 2px;
}
.addr-sep {
    margin: 0 9px 0 7px;
    color: #888;
}
.addr-ic {
    margin-right: -1px;
}
.addr-down {
    margin-left: auto;
    color: #999;
}
.addr-refresh {
    margin: 0 4px 0 10px;
}
.search {
    display: flex;
    align-items: center;
    justify-content: space-between;
    width: 202px;
    height: 21px;
    margin-left: 12px;
    padding: 0 9px 0 8px;
    border: 1px solid #5a5a5a;
    color: #7d7d7d;
}
.dlg-tools {
    display: flex;
    align-items: center;
    height: 30px;
    padding: 0 0 2px 18px;
    background: #202020;
}
.t-caret {
    margin-left: 7px;
    color: #aaa;
}
.t-new {
    margin-left: 30px;
}
.t-view {
    margin-left: 655px;
}
.t-vcaret {
    margin-left: 9px;
    color: #ccc;
}
.t-pane {
    margin-left: 23px;
}
.t-help {
    display: flex;
    align-items: center;
    justify-content: center;
    width: 16px;
    height: 16px;
    margin-left: 20px;
    border-radius: 50%;
    background: #0067c0;
    color: #fff;
    font-size: 11px;
    font-weight: 700;
}
.dlg-body {
    display: flex;
    height: 360px;
    border-top: 1px solid #111;
}
.tree {
    display: flex;
    width: 158px;
    height: 100%;
    background: #191919;
    border-right: 2px solid #111;
    overflow: hidden;
}
.tree-rows {
    width: 139px;
    flex: none;
    overflow: hidden;
}
.t-row {
    display: grid;
    grid-template-columns: 18px 21px 1fr;
    align-items: center;
    height: 24px;
    padding-left: 6px;
    white-space: nowrap;
    overflow: hidden;
    color: #e6e6e6;
}
.t-txt {
    padding-bottom: 2px;
}
.t-sub {
    padding-left: 14px;
}
.t-gap {
    margin-top: 8px;
}
.t-ar {
    width: 8px;
    height: 12px;
    color: #4a4a4a;
}
.t-ic {
    justify-self: center;
    margin-right: 5px;
}
.t-on {
    background: #333;
    height: 22px;
    margin: 1px 0 1px 1px;
    padding-left: 13px;
}
.vscroll {
    display: flex;
    flex-direction: column;
    align-items: center;
    width: 15px;
    margin-left: 1px;
    background: #171717;
}
.vs-up {
    margin: 7px 0 115px;
}
.vs-thumb {
    width: 15px;
    height: 197px;
    flex: none;
    background: #4d4d4d;
}
.vs-down {
    margin-top: 20px;
}
.files {
    position: relative;
    display: flex;
    flex-direction: column;
    flex: 1;
    min-width: 0;
}
.f-head {
    display: grid;
    grid-template-columns: 443px 195px 1fr;
    height: 31px;
    padding-top: 1px;
    color: #ddd;
}
.h-name, .h-col {
    height: 25px;
    line-height: 23px;
}
.h-name {
    padding-left: 19px;
}
.h-col {
    padding-left: 7px;
    border-left: 1px solid #5a5a5a;
}
.h-sort {
    position: absolute;
    left: 224px;
    top: 2px;
}
.f-list {
    flex: 1;
}
.f-row {
    display: grid;
    grid-template-columns: 427px 195px 1fr;
    align-items: center;
    height: 21px;
    margin-left: 16px;
    white-space: nowrap;
}
.f-name {
    display: flex;
    align-items: center;
    gap: 5px;
    padding-left: 6px;
}
.f-date, .f-type {
    padding-left: 7px;
    color: #d0d0d0;
}
.f-on {
    background: #777;
}
.hscroll {
    display: flex;
    align-items: center;
    height: 17px;
    background: #171717;
    border-top: 1px solid #000;
}
.hs-left {
    margin-left: 8px;
}
.hs-thumb {
    width: 605px;
    height: 100%;
    margin-left: 5px;
    background: #4d4d4d;
}
.hs-right {
    margin-left: auto;
    margin-right: 5px;
}
.dlg-foot {
    position: relative;
    flex: 1;
    padding: 9px 17px 0 0;
    background: #383838;
}
.foot-row {
    display: flex;
    align-items: center;
    justify-content: flex-end;
}
.foot-label {
    margin-right: 4px;
}
.field {
    display: flex;
    align-items: center;
    justify-content: space-between;
    height: 23px;
    padding: 0 4px;
    border: 1px solid #8a8a8a;
    color: #eee;
}
.field svg {
    color: #aaa;
}
.f-fname {
    width: 538px;
    margin-right: 12px;
}
.f-filter {
    width: 188px;
}
.foot-btns {
    margin-top: 6px;
}
.tools-caret {
    margin: 0 4.500px 0 16px;
    color: #ccc;
}
.btn {
    display: flex;
    align-items: center;
    justify-content: center;
    width: 88px;
    height: 25px;
    margin-left: 12px;
    border: 2px solid #fff;
    background: #333;
}
.btn-cancel {
    border-color: #bbb;
}
.btn-insert {
    justify-content: flex-start;
    margin-left: 12px;
}
.ins-text {
    width: 69px;
    text-align: center;
}
.ins-split {
    display: flex;
    align-items: center;
    height: 17px;
    padding-left: 2px;
    margin-left: 2px;
    border-left: 1px solid #888;
    color: #ddd;
}
.grip {
    position: absolute;
    right: 2px;
    bottom: 1px;
}
```
